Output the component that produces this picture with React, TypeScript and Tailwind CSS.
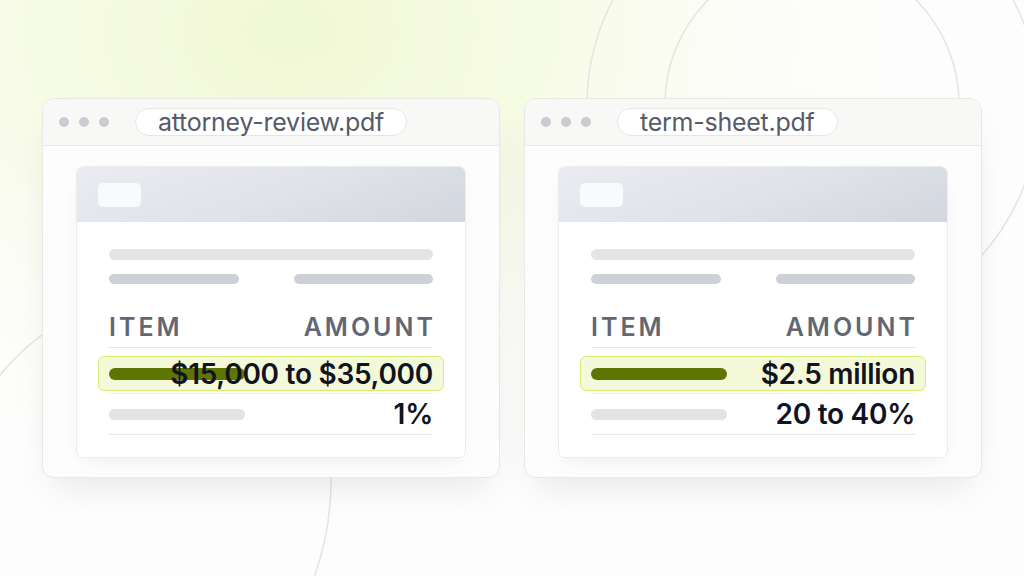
const FONT = { fontFamily: 'Inter, "Liberation Sans", sans-serif' };

type Doc = {
  file: string;
  amount: string;
  second: string;
};

const docs: Doc[] = [
  { file: 'attorney-review.pdf', amount: '$15,000 to $35,000', second: '1%' },
  { file: 'term-sheet.pdf', amount: '$2.5 million', second: '20 to 40%' },
];

function Backdrop() {
  return (
    <svg className="absolute inset-0 pointer-events-none" width="1024" height="576" viewBox="0 0 1024 576" fill="none">
      <circle cx="813" cy="105" r="226" stroke="#e4e4e1" strokeWidth="1.5" />
      <circle cx="812" cy="104" r="147" stroke="#e4e4e1" strokeWidth="1.5" />
      <path d="M -4 380 Q 18 352 46 332" stroke="#e2e3de" strokeWidth="1.5" />
      <path d="M 331 470 C 332 512 326 546 313 580" stroke="#e4e4e1" strokeWidth="1.5" />
    </svg>
  );
}

function DocWindow({ doc }: { doc: Doc }) {
  return (
    <div className="relative w-[458px] h-[380px] flex flex-col rounded-[12px] border border-[#e8e8e5] bg-[#fdfdfd] shadow-[0_18px_36px_-12px_rgba(0,0,0,0.10)] overflow-hidden">
      <div className="h-[47px] flex items-center pl-[16px] bg-[#f8f8f6] border-b border-[#e9e9e6]">
        <div className="flex gap-[10px]">
          <span className="w-[10px] h-[10px] rounded-full bg-[#c9ccd3]" />
          <span className="w-[10px] h-[10px] rounded-full bg-[#c9ccd3]" />
          <span className="w-[10px] h-[10px] rounded-full bg-[#c9ccd3]" />
        </div>
        <div className="ml-[26px] h-[28px] flex items-center px-[22px] rounded-full bg-white border border-[#e6e6e3] text-[25px] leading-none text-[#565b67] tracking-[-0.01em]">
          {doc.file}
        </div>
      </div>

      <div className="flex-1 px-[33px] pt-[20px]">
        <div className="rounded-[7px] border border-[#ececea] bg-white shadow-[0_8px_20px_-8px_rgba(0,0,0,0.08)] overflow-hidden">
          <div className="h-[55px] pl-[21px] pt-[16px] bg-[linear-gradient(160deg,#eaecf1_0%,#dfe2e8_55%,#d2d6de_100%)]">
            <div className="w-[43px] h-[24px] rounded-[5px] bg-[#f9fafb]" />
          </div>

          <div className="px-[32px] pt-[27px] pb-[22px]">
            <div className="h-[11px] rounded-full bg-[#e3e4e8]" />
            <div className="mt-[14px] flex justify-between">
              <div className="w-[130px] h-[10px] rounded-full bg-[#cdd0d7]" />
              <div className="w-[139px] h-[10px] rounded-full bg-[#cdd0d7]" />
            </div>

            <div className="mt-[31px] pb-[7px] border-b border-[#e6e7ea] flex justify-between text-[25px] leading-[25px] font-semibold tracking-[0.12em] text-[#626773]">
              <span>ITEM</span>
              <span className="-mr-[0.12em]">AMOUNT</span>
            </div>

            <div className="pt-[8px] pb-[2px] border-b border-[#eceef0]">
              <div className="-mx-[11px] h-[35px] px-[10px] rounded-[6px] border-[1.5px] border-[#d4ec72] bg-[#f3f9d9] grid items-center">
                <div className="col-start-1 row-start-1 justify-self-start w-[136px] h-[12px] rounded-full bg-[#5f7502]" />
                <div className="col-start-1 row-start-1 justify-self-end text-[28px] leading-none font-semibold tracking-[-0.01em] text-[#111321] whitespace-nowrap">
                  {doc.amount}
                </div>
              </div>
            </div>

            <div className="h-[41px] border-b border-[#e6e7ea] flex items-center justify-between">
              <div className="w-[136px] h-[11px] rounded-full bg-[#e2e3e7]" />
              <div className="text-[28px] leading-none font-semibold tracking-[-0.01em] text-[#111321] whitespace-nowrap">
                {doc.second}
              </div>
            </div>
          </div>
        </div>
      </div>
    </div>
  );
}

export default function App() {
  return (
    <div
      className="relative w-[1024px] h-[576px] overflow-hidden bg-[radial-gradient(ellipse_640px_470px_at_290px_30px,#f1f8d4_0%,#f6fbe4_38%,#fcfdf8_70%,#fdfdfd_100%)]"
      style={FONT}
    >
      <Backdrop />
      <div className="relative h-full flex items-center justify-center gap-[24px]">
        {docs.map((d) => (
          <DocWindow key={d.file} doc={d} />
        ))}
      </div>
    </div>
  );
}
